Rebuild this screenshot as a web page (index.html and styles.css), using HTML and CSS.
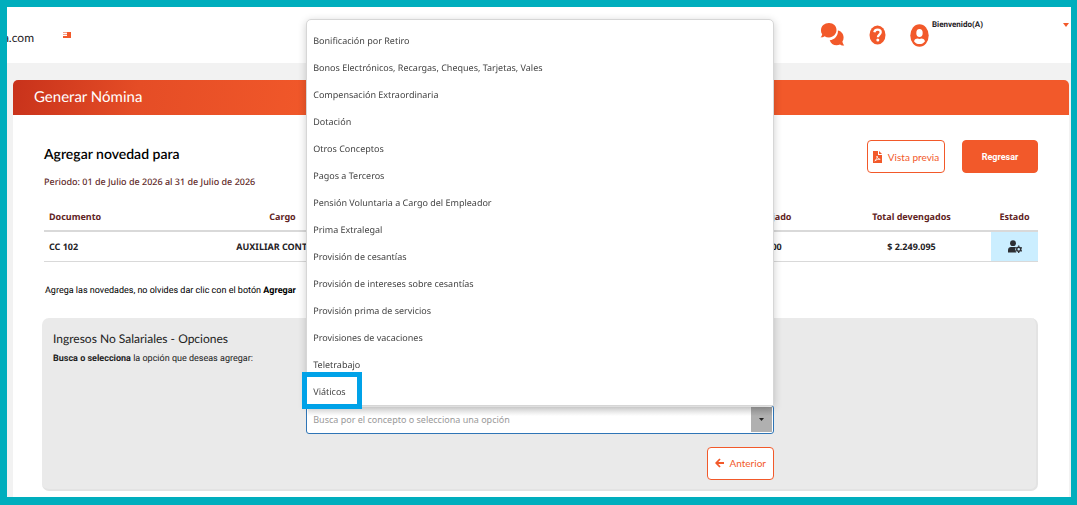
FILE: index.html
```html
<!DOCTYPE html>
<html lang="es">
<head>
<meta charset="utf-8">
<title>Generar Nómina</title>
<link rel="stylesheet" href="styles.css">
</head>
<body>
<header class="topbar">
  <span class="site">a.com</span>
  <button class="icon-button menu-toggle" aria-label="Menú">
    <svg width="10" height="8" viewBox="0 0 10 8"><path fill="#f3a08a" d="M1 1h4v1H1zM1 3h4v1H1z"/><path fill="#f2592a" d="M5 1h4v6H5zM1 5h4v2H1z"/></svg>
  </button>
  <nav class="tools">
    <button class="icon-button" aria-label="Chat">
      <svg width="25" height="24" viewBox="0 0 25 24" fill="#f2592a"><path d="M9 0c4.500 0 7.500 3 7.500 7s-3.200 7.400-7.500 7.400c-1.700 0-3.200-.4-4.400-1.200-1 .8-2.400 1.200-4 1.200.8-.9 1.400-2 1.600-3.200C1.300 10.100 1 8.700 1 7.200 1 3 4.500 0 9 0z"/><path d="M17.900 7.400c3.300.6 5.700 3.400 5.700 7 0 1.600-.4 3-1.200 4.200.2 1.400.8 2.900 1.800 4-1.700 0-3.100-.4-4.200-1.200-1 .5-2.200.8-3.400.8-3.400 0-6-1.900-6.900-5 4.700-.4 8.600-4.500 8.200-9.800z"/></svg>
    </button>
    <button class="icon-button" aria-label="Ayuda">
      <svg width="17" height="20" viewBox="0 0 17 20"><ellipse cx="8.500" cy="10" rx="8" ry="9.500" fill="#f2592a"/><path d="M5.300 7.200C5.700 5.400 7 4.700 8.500 4.700c1.900 0 3.200 1 3.200 2.600 0 2.300-2.800 2.300-2.800 4.900" fill="none" stroke="#fff" stroke-width="2.300"/><circle cx="8.800" cy="15" r="1.500" fill="#fff"/></svg>
    </button>
    <button class="icon-button" aria-label="Usuario">
      <svg width="19" height="23" viewBox="0 0 19 23"><ellipse cx="9.500" cy="11.500" rx="9.200" ry="11.300" fill="#f2592a"/><ellipse cx="9.500" cy="9" rx="3.200" ry="4" fill="#fff"/><path fill="#fff" d="M4 17.200c.8-2 2.200-2.600 3.500-2.600.6.300 1.300.4 2 .4s1.400-.1 2-.4c1.300 0 2.700.6 3.500 2.600-1.400 1.900-3.300 2.900-5.500 2.900S5.400 19.100 4 17.200z"/></svg>
    </button>
  </nav>
  <div class="user">
    <span>Bienvenido(A)</span>
    <button class="icon-button" aria-label="Opciones de usuario">
      <svg width="6" height="4" viewBox="0 0 6 4"><path fill="#f2592a" d="M0 0h6L3 4z"/></svg>
    </button>
  </div>
</header>

<main class="card">
  <h1 class="banner">Generar Nómina</h1>
  <div class="content">
    <div class="heading">
      <div>
        <h2 class="employee">Agregar novedad para</h2>
        <p class="period">Periodo: 01 de Julio de 2026 al 31 de Julio de 2026</p>
      </div>
      <div class="actions">
        <button class="button outline">
          <svg width="9" height="12" viewBox="0 0 9 12"><path fill="#f2592a" d="M0 0h5v4h4v8H0z"/><path fill="#f2592a" d="M6 0l3 3H6z"/><path d="M1.800 9.800C3.500 8.800 4.300 6.800 4 5c.2 2 1.400 3.200 3.200 3.300-1.800-.2-3.700.4-5.400 1.500z" fill="none" stroke="#fff" stroke-width=".8"/></svg>
          Vista previa
        </button>
        <button class="button solid">Regresar</button>
      </div>
    </div>

    <table class="summary">
      <colgroup><col class="c-doc"><col class="c-role"><col class="c-gap"><col class="c-worked"><col class="c-total"><col class="c-state"></colgroup>
      <thead>
        <tr><th class="left">Documento</th><th>Cargo</th><td></td><th>Total trabajado</th><th>Total devengados</th><th>Estado</th></tr>
      </thead>
      <tbody>
        <tr><td class="left">CC 102</td><td>AUXILIAR CONTABLE</td><td></td><td>$ 2.000.000</td><td>$ 2.249.095</td>
          <td class="state"><svg width="14" height="13" viewBox="0 0 14 13"><circle cx="5" cy="3.200" r="2.900" fill="#2d2f33"/><path fill="#2d2f33" d="M0 12.500V10c0-2 1.300-3 3-3h3.500c.5 0 .9.100 1.300.300-.8 1.400-.8 3.400.6 5.200z"/><circle cx="10.700" cy="9.300" r="2" fill="none" stroke="#2d2f33" stroke-width="1.500"/><path stroke="#2d2f33" stroke-width="1.300" d="M10.700 5.600v1.200M10.700 11.800V13M7.500 7.500l1 .6M12.900 10.500l1 .6M13.900 7.500l-1 .6M8.500 10.500l-1 .6"/></svg></td></tr>
      </tbody>
    </table>

    <p class="note">Agrega las novedades, no olvides dar clic con el botón <b>Agregar</b></p>

    <section class="panel">
      <h3 class="panel-title">Ingresos No Salariales - Opciones</h3>
      <label class="panel-text" for="concept"><b>Busca o selecciona</b> la opción que deseas agregar:</label>
      <div class="picker">
        <div class="combo">
          <input id="concept" class="combo-input" type="text" placeholder="Busca por el concepto o selecciona una opción" autofocus>
          <button class="combo-arrow" aria-label="Mostrar opciones"><svg width="5" height="3" viewBox="0 0 5 3"><path fill="#222" d="M0 0h5L2.500 3z"/></svg></button>
          <ul class="menu">
            <li>Bonificación por Retiro</li>
            <li>Bonos Electrónicos, Recargas, Cheques, Tarjetas, Vales</li>
            <li>Compensación Extraordinaria</li>
            <li>Dotación</li>
            <li>Otros Conceptos</li>
            <li>Pagos a Terceros</li>
            <li>Pensión Voluntaria a Cargo del Empleador</li>
            <li>Prima Extralegal</li>
            <li>Provisión de cesantías</li>
            <li>Provisión de intereses sobre cesantías</li>
            <li>Provisión prima de servicios</li>
            <li>Provisiones de vacaciones</li>
            <li>Teletrabajo</li>
            <li class="marked">Viáticos</li>
          </ul>
        </div>
        <button class="button outline back">
          <svg width="9" height="10" viewBox="0 0 9 10"><path d="M9 5H1.500M5 1L1.200 5 5 9" fill="none" stroke="#f2592a" stroke-width="1.800"/></svg>
          Anterior
        </button>
      </div>
    </section>
  </div>
</main>
</body>
</html>
```
FILE: styles.css
```css
*, *::after { box-sizing: border-box; margin: 0; padding: 0; }

body {
  min-height: 100vh;
  display: flex;
  flex-direction: column;
  border: solid #00aebd;
  border-width: 7px 6px 8px 7px;
  background: #f2f2f2;
  color: #1f2226;
  font-family: Lato, "Liberation Sans", sans-serif;
  font-size: 11px;
  text-rendering: geometricPrecision;
}

button, input { font: inherit; color: inherit; }
button { cursor: pointer; }
svg { display: block; flex: none; }

.topbar {
  height: 56px;
  display: flex;
  align-items: center;
  background: #fff;
}
.site {
  width: 27px;
  display: flex;
  justify-content: flex-end;
  overflow: hidden;
  font-size: 12px;
  padding-top: 4px;
}
.icon-button { border: 0; background: none; }
.menu-toggle { margin-left: 28px; }
.tools {
  display: flex;
  align-items: center;
  gap: 24px;
  margin-left: auto;
}
.user {
  width: 142px;
  align-self: flex-start;
  display: flex;
  align-items: center;
  justify-content: space-between;
  padding: 12px 2px 0 3px;
  font: bold 8px/12px Roboto, sans-serif;
}

.card {
  flex: 1;
  margin: 17px 2px 0 6px;
  border-radius: 5px 5px 0 0;
  background: #fff;
}
.banner {
  padding: 0 21px;
  border-radius: 5px 5px 0 0;
  background: linear-gradient(100deg, #c8321b, #e54d26 12%, #f2592a 30%);
  color: #fff;
  font-size: 15px;
  font-weight: 400;
  line-height: 35px;
}
.content { padding: 25px 31px 6px; }

.heading { display: flex; justify-content: space-between; }
.employee {
  color: #000;
  font-size: 14px;
  font-weight: 600;
  line-height: 28px;
}
.period {
  color: #5f2a2a;
  font-family: "Noto Sans", sans-serif;
  font-size: 9px;
  font-weight: 500;
  line-height: 28px;
}
.actions { display: flex; align-items: flex-start; gap: 17px; }
.button {
  height: 33px;
  display: flex;
  align-items: center;
  justify-content: center;
  gap: 6px;
  border: 1px solid #f2592a;
  border-radius: 4px;
}
.outline { width: 78px; background: #fff; color: #f2592a; font-size: 10px; }
.solid { width: 76px; background: #f2592a; color: #fff; font: bold 9px Roboto, sans-serif; }

.summary {
  width: 100%;
  margin-top: 7px;
  table-layout: fixed;
  border-collapse: collapse;
  font-family: "Noto Sans", sans-serif;
  font-size: 9px;
  font-weight: 700;
  text-align: center;
  white-space: nowrap;
}
.summary tr { height: 30px; border-bottom: 1px solid #d9d9d9; }
.summary thead tr { height: 28px; border-bottom: 2px solid #d9d9d9; }
.summary th { color: #5f2424; }
.summary .left { padding-left: 5px; text-align: left; }
.c-doc { width: 11%; }
.c-role { width: 26%; }
.c-worked { width: 15%; }
.c-total { width: 16%; }
.c-state { width: 47px; }
.state { background: #cbeeff; }
.state svg { margin: auto; }

.note { padding: 19px 1px 17px; line-height: 20px; font-family: Roboto, sans-serif; font-size: 9px; color: #000; }
b { font-weight: 700; }

.panel {
  margin-left: -2px;
  padding: 11px 9px 9px 11px;
  border: solid #e3e3e3;
  border-width: 0 2px 2px 0;
  border-radius: 7px;
  background: #eaeaea;
}
.panel-title { font-size: 12px; font-weight: 400; line-height: 20px; color: #222; }
.panel-text { display: block; padding-top: 1px; line-height: 19px; font-family: Roboto, sans-serif; font-size: 9px; color: #222; }
.picker {
  width: 48%;
  display: flex;
  flex-direction: column;
  gap: 13px;
  margin: 36px auto 0;
}
.combo {
  position: relative;
  display: flex;
  height: 29px;
  padding: 1px;
  border: 1px solid #2e75b6;
  border-radius: 3px;
  background: #fff;
}
.combo-input {
  flex: 1;
  min-width: 0;
  padding: 0 5px;
  border: 0;
  outline: 0;
  background: linear-gradient(#e2e2e2, #fff 9px);
  font-family: "Noto Sans", sans-serif;
  font-size: 9px;
}
.combo-input::placeholder { color: #999; opacity: 1; }
.combo-arrow {
  width: 21px;
  display: grid;
  place-items: center;
  border: 0;
  background: linear-gradient(#999, #b0b0b0 9px);
}
.menu {
  position: absolute;
  right: -1px;
  bottom: 100%;
  left: -1px;
  padding-top: 7px;
  border: 1px solid #d6d6d6;
  border-radius: 5px 5px 0 0;
  background: #fff;
  box-shadow: 0 2px 8px rgba(0, 0, 0, .2);
  list-style: none;
  color: #444;
  font-family: "Noto Sans", sans-serif;
  font-size: 9px;
  line-height: 27px;
}
.menu li { padding: 0 6px; }
.marked { position: relative; }
.marked::after {
  content: "";
  position: absolute;
  top: -6px;
  left: -5px;
  width: 60px;
  height: 37px;
  border: 5px solid #00a2e8;
}
.back { width: 67px; align-self: flex-end; }
```
